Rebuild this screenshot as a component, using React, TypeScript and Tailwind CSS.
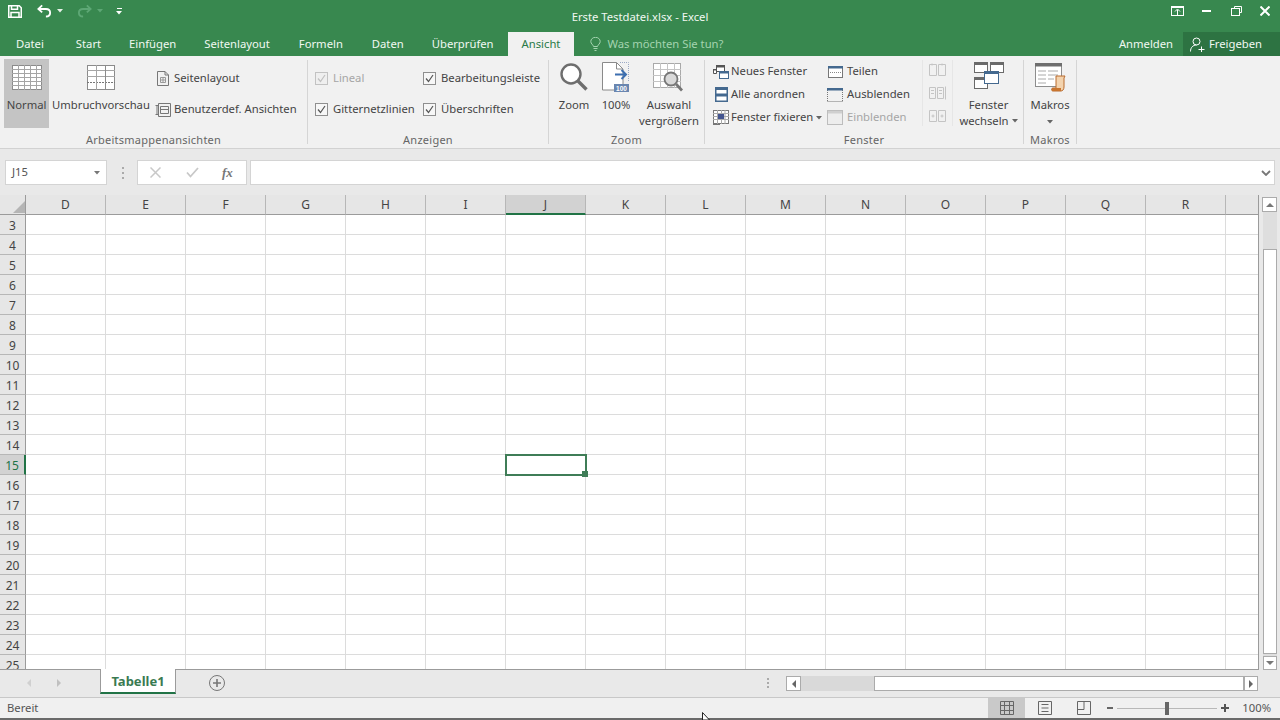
import React from "react";

const font = { fontFamily: '"Noto Sans", "Open Sans", "Liberation Sans", sans-serif' };
const columns = ["D", "E", "F", "G", "H", "I", "J", "K", "L", "M", "N", "O", "P", "Q", "R"];
const rows = Array.from({ length: 23 }, (_, i) => i + 3);

function Save() {
  return (
    <svg width="14" height="13" viewBox="0 0 14 13" fill="none" stroke="#fff" strokeWidth="1.500">
      <path d="M.75.75h10.500L13.250 2.750V12.250H.75z" />
      <path d="M3.500.75v3.500h6V.75M3 12.250V7.500h8v4.750" />
    </svg>
  );
}
function Undo({ color = "#fff", flip }: { color?: string; flip?: boolean }) {
  return (
    <svg width="15" height="14" viewBox="0 0 16 14" fill="none" stroke={color} strokeWidth="2" style={flip ? { transform: "scaleX(-1)" } : undefined}>
      <path d="M5.500 1 1.500 4.800l4 3.700" />
      <path d="M2 4.800h7.500c3 0 4.500 1.800 4.500 4s-1.500 4-4.500 4" />
    </svg>
  );
}
function Caret({ color = "#666", w = 5 }: { color?: string; w?: number }) {
  return (
    <svg width={w + 1} height={4} viewBox="0 0 6 4">
      <path d="M0 0h6L3 3.500z" fill={color} />
    </svg>
  );
}
function GridIcon({ w, h, break: pageBreak }: { w: number; h: number; break?: boolean }) {
  const vs = pageBreak ? [9, 18] : [6, 12, 18, 24];
  const hs = pageBreak ? [5, 11, 17] : [4, 8, 12, 16, 20];
  return (
    <svg width={w} height={h} viewBox={`0 0 ${w} ${h}`} fill="none">
      <rect x=".5" y=".5" width={w - 1} height={h - 1} fill="#fff" stroke="#8b8b8b" />
      {hs.map((y) => (
        <path key={y} d={`M0 ${y + 0.5}h${w}`} stroke={pageBreak && y === 17 ? "#777" : "#a5a5a5"} strokeDasharray={pageBreak && y === 17 ? "2 1" : undefined} />
      ))}
      {vs.map((x) => (
        <path key={x} d={`M${x + 0.5} 0v${h}`} stroke={pageBreak && x === 18 ? "#8b8b8b" : "#a5a5a5"} />
      ))}
    </svg>
  );
}
function PageLayoutIcon() {
  return (
    <svg width="12" height="15" viewBox="0 0 12 15" fill="none" stroke="#777">
      <path d="M.5.500h7.500L11.500 4v10.500H.5z" />
      <path d="M8 .5V4h3.500" />
      <path d="M3.500 6.500h5v5h-5zM6 6.500v5M3.500 9h5" stroke="#999" />
    </svg>
  );
}
function CustomViewIcon() {
  return (
    <svg width="16" height="16" viewBox="0 0 16 16" fill="none" stroke="#777">
      <path d="M3.500 1.500h12v13h-12z" />
      <path d="M.5 3.500h3M.5 12.500h3M2 3.500v9M5.500 4.500h8v7h-8z" />
      <path d="M5.500 7.500h8" />
    </svg>
  );
}
function Check({ disabled }: { disabled?: boolean }) {
  return (
    <span className={`flex h-[13px] w-[13px] shrink-0 items-center justify-center border ${disabled ? "border-[#c2c2c2] bg-[#efefef]" : "border-[#8f8f8f] bg-[#f7f7f7]"}`}>
      <svg width="9" height="9" viewBox="0 0 9 9" fill="none" stroke={disabled ? "#c0c0c0" : "#555"} strokeWidth="1.200">
        <path d="M1 4.500 3.500 7.500 8 1" />
      </svg>
    </span>
  );
}
function Mag() {
  return (
    <svg width="28" height="28" viewBox="0 0 28 28" fill="none">
      <circle cx="11" cy="11" r="9.500" stroke="#6e6e6e" strokeWidth="2.400" fill="#fff" />
      <path d="M18 18l8.500 8.500" stroke="#6e6e6e" strokeWidth="3.400" />
    </svg>
  );
}
function HundredIcon() {
  return (
    <svg width="28" height="30" viewBox="0 0 28 30" fill="none">
      <path d="M.5.500h14L21 7v21H.5z" fill="#fff" stroke="#8a8a8a" />
      <path d="M14.500.5V7H21" stroke="#8a8a8a" />
      <path d="M18 .5h8.500V19" stroke="#9aa8c4" strokeDasharray="1 1" />
      <path d="M13 12.500h10M19.500 8l4.500 4.500-4.500 4.500" stroke="#3d6fb0" strokeWidth="2" />
      <rect x="12" y="22" width="15" height="8" fill="#6a86b0" />
      <text x="19.500" y="28.600" fontSize="6.500" fontWeight="700" fill="#fff" textAnchor="middle" fontFamily="Liberation Sans">100</text>
    </svg>
  );
}
function ZoomSelectionIcon() {
  return (
    <svg width="32" height="30" viewBox="0 0 32 30" fill="none">
      <rect x=".5" y=".5" width="27" height="24" fill="#fff" stroke="#a9a9a9" />
      <path d="M0 6.500h28M0 12.500h28M0 18.500h28M7.500 0v25M14.500 0v25M21.500 0v25" stroke="#c4c4c4" />
      <circle cx="18" cy="16" r="6.500" fill="#d9d9d9" stroke="#767676" strokeWidth="1.800" />
      <path d="M23 21l6 6.500" stroke="#767676" strokeWidth="2.800" />
    </svg>
  );
}
function NewWindowIcon() {
  return (
    <svg width="16" height="14" viewBox="0 0 16 14" fill="none">
      <rect x="3.500" y=".5" width="8" height="6" stroke="#555" fill="#fff" />
      <path d="M3 0h9v2.500H3z" fill="#555" />
      <path d="M.5 4.500h3v4h-3z" stroke="#555" fill="#fff" />
      <path d="M0 4h4v1.500H0z" fill="#555" />
      <rect x="6.500" y="6.500" width="9" height="7" stroke="#44698f" fill="#fff" />
      <path d="M6 6h10v2.500H6z" fill="#44698f" />
    </svg>
  );
}
function ArrangeIcon() {
  return (
    <svg width="13" height="15" viewBox="0 0 13 15" fill="none">
      <rect x=".75" y=".75" width="11.500" height="13.500" stroke="#44698f" strokeWidth="1.500" fill="#fff" />
      <path d="M0 0h13v3H0zM0 6.500h13v3H0z" fill="#44698f" />
    </svg>
  );
}
function FreezeIcon() {
  return (
    <svg width="16" height="15" viewBox="0 0 16 15" fill="none">
      <rect x=".5" y=".5" width="15" height="13" fill="#fff" stroke="#777" />
      <path d="M0 3.500h16M0 6.500h16M0 9.500h16M4.500 0v14M8.500 0v14M12 0v14" stroke="#aaa" />
      <rect x="5" y="4" width="6" height="5" fill="#44558f" />
      <path d="M0 14.500h7" stroke="#777" />
    </svg>
  );
}
function SplitIcon() {
  return (
    <svg width="15" height="12" viewBox="0 0 15 12" fill="none">
      <rect x=".5" y=".5" width="14" height="11" stroke="#777" fill="#fff" />
      <path d="M0 0h15v2.500H0z" fill="#44698f" />
      <path d="M2 6.500h11" stroke="#888" strokeDasharray="1 1" />
    </svg>
  );
}
function HideIcon() {
  return (
    <svg width="16" height="14" viewBox="0 0 16 14" fill="none">
      <path d="M.5 13.500h15M.5 2v11M15.500 2v11" stroke="#777" strokeDasharray="1 1" />
      <path d="M0 0h16v2.500H0z" fill="#44698f" />
    </svg>
  );
}
function ShowIcon() {
  return (
    <svg width="16" height="15" viewBox="0 0 16 15" fill="none">
      <rect x=".5" y=".5" width="15" height="14" fill="#ededed" stroke="#bdbdbd" />
      <path d="M1 1h14v2.500H1z" fill="#cfcfcf" />
    </svg>
  );
}
function SmallDisabled({ kind }: { kind: number }) {
  return (
    <svg width="17" height="14" viewBox="0 0 17 14" fill="none" stroke="#c4c4c4">
      {kind === 0 && <path d="M.5 1.500h7v11h-7zM9.500 1.500h7v11h-7zM3 .5v2M13 .5v2" />}
      {kind === 1 && <path d="M.5 1.500h6v11h-6zM8.500 1.500h6v11h-6zM16.500 .5v13M2 4.500h3M2 7.500h3M10 4.500h3M10 7.500h3" />}
      {kind === 2 && <path d="M.5 1.500h7v11h-7zM9.500 1.500h7v11h-7zM2.500 7h3M11.500 7h3M4 5.500V8.500M13 5.500v3" />}
    </svg>
  );
}
function SwitchWindowIcon() {
  return (
    <svg width="30" height="27" viewBox="0 0 30 27" fill="none">
      <rect x=".5" y=".5" width="13" height="10" fill="#fff" stroke="#6a6a6a" />
      <path d="M0 0h14v3H0z" fill="#6a6a6a" />
      <rect x="16.500" y=".5" width="13" height="10" fill="#fff" stroke="#6a6a6a" />
      <path d="M16 0h14v3H16z" fill="#6a6a6a" />
      <rect x=".5" y="15.500" width="13" height="11" fill="#fff" stroke="#6a6a6a" />
      <path d="M0 15h14v3H0z" fill="#6a6a6a" />
      <rect x="10.500" y="9.500" width="14" height="12" fill="#fff" stroke="#44698f" />
      <path d="M10 9h15v3H10z" fill="#44698f" />
    </svg>
  );
}
function MacroIcon() {
  return (
    <svg width="31" height="29" viewBox="0 0 31 29" fill="none">
      <rect x=".5" y=".5" width="26" height="23" fill="#fff" stroke="#8d8d8d" />
      <path d="M0 0h27v3.500H0z" fill="#6e6e6e" />
      <path d="M3 8h8M13 8h10M3 12h8M13 12h10M3 16h8M13 16h6M3 20h8" stroke="#aaa" />
      <path d="M21 13h9l-1 2v9c0 2.500-1.500 4-3 4h-8c-2 0-2-3 0-3h3V14z" fill="#f3d3ae" stroke="#b96a2c" />
      <path d="M17 25h9v3h-9z" fill="#c9752f" />
    </svg>
  );
}
function Sep() {
  return <div className="mt-1 h-[84px] w-px shrink-0 bg-[#d5d5d5]" />;
}
function GroupLabel({ children }: { children: React.ReactNode }) {
  return <div className="absolute bottom-0 left-0 right-0 text-center text-[11px] leading-[16px] tracking-[0.25px] text-[#666]">{children}</div>;
}
function LargeButton({ w, icon, lines, iconH = 30, caret, top = 4, className = "" }: { w: number; icon: React.ReactNode; lines: React.ReactNode[]; iconH?: number; caret?: boolean; top?: number; className?: string }) {
  return (
    <div className={`flex shrink-0 flex-col items-center ${className}`} style={{ width: w }}>
      <div className="flex items-start justify-center" style={{ marginTop: top, height: iconH }}>
        {icon}
      </div>
      {lines.map((l, i) => (
        <div key={i} className="flex items-center gap-[3px] whitespace-nowrap text-center leading-[16px]">{l}</div>
      ))}
      {caret && <div className="mt-[7px]"><Caret /></div>}
    </div>
  );
}
function Row({ icon, label, iconW, muted }: { icon: React.ReactNode; label: React.ReactNode; iconW: number; muted?: boolean }) {
  return (
    <div className={`flex h-[23px] items-center whitespace-nowrap ${muted ? "text-[#a6a6a6]" : ""}`}>
      <span className="flex shrink-0 items-center justify-center" style={{ width: iconW }}>{icon}</span>
      {label}
    </div>
  );
}
function CheckRow({ label, disabled }: { label: string; disabled?: boolean }) {
  return (
    <div className={`flex h-[31px] items-center gap-[5px] whitespace-nowrap ${disabled ? "text-[#a6a6a6]" : ""}`}>
      <Check disabled={disabled} />
      {label}
    </div>
  );
}
function Tab({ children, ml, active }: { children: string; ml: number; active?: boolean }) {
  return (
    <div className={`flex h-[24px] items-center whitespace-nowrap ${active ? "bg-[#f1f1f1] px-[14px] text-[#2b7a48]" : "text-[#f1f8f2]"}`} style={{ marginLeft: ml }}>
      {children}
    </div>
  );
}
function Dots() {
  return (
    <>
      <div className="h-[2px] w-[2px] bg-[#aaa]" />
      <div className="h-[2px] w-[2px] bg-[#aaa]" />
      <div className="h-[2px] w-[2px] bg-[#aaa]" />
    </>
  );
}

export default function App() {
  return (
    <div className="relative flex h-[720px] w-[1280px] flex-col overflow-hidden bg-[#e9e9e9] text-[11.25px] text-[#444]" style={font}>
      {/* Title bar */}
      <div className="relative flex h-[32px] shrink-0 items-start bg-[#38884f] text-white">
        <div className="ml-[8px] mt-[5px]"><Save /></div>
        <div className="ml-[15px] mt-[4px]"><Undo /></div>
        <div className="ml-[5px] mt-[9px]"><Caret color="#e8f2ea" /></div>
        <div className="ml-[14px] mt-[4px]"><Undo color="#5da775" flip /></div>
        <div className="ml-[5px] mt-[9px]"><Caret color="#5da775" /></div>
        <div className="ml-[13px] mt-[8px] flex flex-col items-center gap-[2px]">
          <div className="h-px w-[5px] bg-white" />
          <Caret color="#fff" />
        </div>
        <div className="absolute left-0 right-0 top-[9px] text-center text-[11.25px] leading-[16px] text-[#f1f8f2]">Erste Testdatei.xlsx - Excel</div>
        <div className="ml-auto mr-[10px] mt-[6px] flex items-center">
          <svg width="13" height="10" viewBox="0 0 13 10" fill="none" stroke="#fff">
            <rect x=".5" y=".5" width="12" height="9" />
            <path d="M0 1h13" strokeWidth="2" />
            <path d="M6.500 9V4M4 5.500l2.500-2.500L9 5.500" />
          </svg>
          <div className="ml-[18px] h-[2px] w-[9px] bg-white" />
          <svg className="ml-[20px]" width="11" height="10" viewBox="0 0 11 10" fill="none" stroke="#fff">
            <path d="M3.500 2.500V.5h7v6H8.500" />
            <rect x=".5" y="2.500" width="8" height="7" />
          </svg>
          <svg className="ml-[18px]" width="10" height="10" viewBox="0 0 10 10" fill="none" stroke="#fff" strokeWidth="2">
            <path d="M.5.5l9 9M9.500.5l-9 9" />
          </svg>
        </div>
      </div>
      {/* Tabs */}
      <div className="flex h-[24px] shrink-0 items-center bg-[#38884f]">
        <Tab ml={16}>Datei</Tab>
        <Tab ml={32}>Start</Tab>
        <Tab ml={28}>Einfügen</Tab>
        <Tab ml={28}>Seitenlayout</Tab>
        <Tab ml={29}>Formeln</Tab>
        <Tab ml={29}>Daten</Tab>
        <Tab ml={28}>Überprüfen</Tab>
        <Tab ml={14} active>Ansicht</Tab>
        <div className="ml-[16px] flex items-center gap-[6px] whitespace-nowrap text-[#a4d4b0]">
          <svg width="11" height="14" viewBox="0 0 11 14" fill="none" stroke="#a4d4b0">
            <path d="M3.500 9.500C3 7.500.8 6.800.8 4.500a4.700 4.200 0 0 1 9.400 0c0 2.300-2.200 3-2.700 5z" />
            <path d="M3.500 11.500h4M4.500 13.500h2" />
          </svg>
          Was möchten Sie tun?
        </div>
        <div className="ml-auto mr-[10px] text-[#f1f8f2]">Anmelden</div>
        <div className="flex h-[24px] w-[97px] items-center gap-[4px] bg-[#2d7342] pl-[7px] text-[#f1f8f2]">
          <svg width="15" height="15" viewBox="0 0 15 15" fill="none" stroke="#fff">
            <circle cx="6.500" cy="4.500" r="3.500" />
            <path d="M.5 14.500c0-4 2.500-6.500 6-6.500M8.500 12.500h6M11.500 9.500v5.500" />
          </svg>
          Freigeben
        </div>
      </div>
      {/* Ribbon */}
      <div className="flex h-[93px] shrink-0 border-b border-[#d2d2d2] bg-[#f1f1f1]">
        <div className="relative flex h-full w-[307px] shrink-0 pl-[4px] pt-[3px]">
          <div className="h-[69px] w-[45px] shrink-0 bg-[#c4c4c4]">
            <LargeButton w={45} top={6} iconH={32} icon={<GridIcon w={30} h={25} />} lines={["Normal"]} />
          </div>
          <LargeButton w={100} className="ml-[2px]" top={6} iconH={32} icon={<GridIcon w={28} h={25} break />} lines={["Umbruchvorschau"]} />
          <div className="ml-[6px] mt-[4px] flex flex-col">
            <div className="flex h-[31px] items-center whitespace-nowrap">
              <PageLayoutIcon />
              <span className="ml-[5px]">Seitenlayout</span>
            </div>
            <div className="flex h-[31px] items-center whitespace-nowrap">
              <span className="-ml-[2px]"><CustomViewIcon /></span>
              <span className="ml-[3px]">Benutzerdef. Ansichten</span>
            </div>
          </div>
          <GroupLabel>Arbeitsmappenansichten</GroupLabel>
        </div>
        <Sep />
        <div className="relative flex h-full w-[240px] shrink-0 pl-[7px] pt-[7px]">
          <div className="flex w-[108px] shrink-0 flex-col">
            <CheckRow label="Lineal" disabled />
            <CheckRow label="Gitternetzlinien" />
          </div>
          <div className="flex flex-col">
            <CheckRow label="Bearbeitungsleiste" />
            <CheckRow label="Überschriften" />
          </div>
          <GroupLabel>Anzeigen</GroupLabel>
        </div>
        <Sep />
        <div className="relative flex h-full w-[155px] shrink-0 pl-[5px]">
          <LargeButton w={40} top={7} iconH={34} icon={<Mag />} lines={["Zoom"]} />
          <LargeButton w={44} top={6} iconH={35} icon={<HundredIcon />} lines={["100%"]} />
          <LargeButton w={62} top={7} iconH={34} icon={<ZoomSelectionIcon />} lines={["Auswahl", "vergrößern"]} />
          <GroupLabel>Zoom</GroupLabel>
        </div>
        <Sep />
        <div className="relative flex h-full w-[318px] shrink-0 pl-[7px] pt-[4px]">
          <div className="flex w-[115px] shrink-0 flex-col">
            <Row iconW={18} icon={<NewWindowIcon />} label={<span className="ml-[1px]">Neues Fenster</span>} />
            <Row iconW={18} icon={<ArrangeIcon />} label={<span className="ml-[1px]">Alle anordnen</span>} />
            <Row iconW={18} icon={<FreezeIcon />} label={<span className="ml-[1px] flex items-center gap-[3px]">Fenster fixieren <Caret /></span>} />
          </div>
          <div className="flex w-[95px] shrink-0 flex-col">
            <Row iconW={16} icon={<SplitIcon />} label={<span className="ml-[4px]">Teilen</span>} />
            <Row iconW={16} icon={<HideIcon />} label={<span className="ml-[4px]">Ausblenden</span>} />
            <Row iconW={16} muted icon={<ShowIcon />} label={<span className="ml-[4px]">Einblenden</span>} />
          </div>
          <div className="flex h-[66px] w-[31px] shrink-0 flex-col items-center gap-[9px] border-l border-r border-[#e6e6e6] pt-[3px]">
            <SmallDisabled kind={0} />
            <SmallDisabled kind={1} />
            <SmallDisabled kind={2} />
          </div>
          <LargeButton w={71} top={2} iconH={35} icon={<SwitchWindowIcon />} lines={["Fenster", <>wechseln <Caret /></>]} />
          <GroupLabel>Fenster</GroupLabel>
        </div>
        <Sep />
        <div className="relative flex h-full w-[52px] shrink-0">
          <LargeButton w={52} top={7} iconH={34} icon={<MacroIcon />} lines={["Makros"]} caret />
          <GroupLabel>Makros</GroupLabel>
        </div>
        <Sep />
      </div>
      {/* Formula bar */}
      <div className="flex h-[46px] shrink-0 items-start bg-[#e9e9e9] pl-[5px] pt-[11px]">
        <div className="flex h-[25px] w-[102px] items-center justify-between border border-[#d4d4d4] bg-white pl-[6px] pr-[5px] text-[#555]">
          J15
          <Caret color="#777" w={7} />
        </div>
        <div className="ml-[15px] flex h-[25px] flex-col justify-center gap-[3px]">
          <Dots />
        </div>
        <div className="ml-[13px] flex h-[25px] w-[110px] items-center border border-[#d4d4d4] bg-white">
          <svg className="ml-[12px]" width="11" height="11" viewBox="0 0 11 11" fill="none" stroke="#c8c8c8" strokeWidth="1.500">
            <path d="M.5.5l10 10M10.500.5l-10 10" />
          </svg>
          <svg className="ml-[25px]" width="13" height="11" viewBox="0 0 13 11" fill="none" stroke="#c8c8c8" strokeWidth="1.800">
            <path d="M1 5.500 4.500 9.500 12 1" />
          </svg>
          <span className="ml-[23px] text-[13px] font-bold italic leading-none text-[#777]" style={{ fontFamily: '"Liberation Serif", serif' }}>fx</span>
        </div>
        <div className="ml-[3px] flex h-[25px] w-[1025px] items-center justify-end border border-[#d4d4d4] bg-white pr-[3px]">
          <svg width="10" height="6" viewBox="0 0 10 6" fill="none" stroke="#777" strokeWidth="1.800">
            <path d="M1 1l4 4 4-4" />
          </svg>
        </div>
      </div>
      {/* Sheet */}
      <div className="relative flex min-h-0 flex-1">
        <div className="w-[1259px] shrink-0 overflow-hidden border-b border-r border-[#9b9b9b] bg-white">
          <div className="flex h-[20px] bg-[#e6e6e6]">
            <div className="relative h-[20px] w-[26px] shrink-0 border-b border-r border-[#9b9b9b]">
              <svg className="absolute bottom-[1px] right-0" width="12" height="12" viewBox="0 0 12 12"><path d="M12 0v12H0z" fill="#b5b5b5" /></svg>
            </div>
            {columns.map((c) => (
              <div key={c} className={`flex h-[20px] w-[80px] shrink-0 items-center justify-center border-r border-[#b7b7b7] pt-px text-[12px] ${c === "J" ? "border-b-2 border-b-[#217346] bg-[#d2d2d2]" : "border-b border-b-[#9b9b9b]"}`}>
                {c}
              </div>
            ))}
            <div className="h-[20px] flex-1 border-b border-[#9b9b9b]" />
          </div>
          {rows.map((r) => (
            <div key={r} className="flex h-[20px]">
              <div className={`flex h-[20px] w-[26px] shrink-0 items-center justify-center border-b pt-[2px] text-[12px] ${r === 15 ? "border-r-2 border-b-[#b7b7b7] border-r-[#217346] bg-[#d2d2d2] text-[#217346]" : "border-r border-b-[#b7b7b7] border-r-[#9b9b9b] bg-[#e6e6e6]"}`}>
                {r}
              </div>
              {columns.map((c) => (
                <div key={c} className="relative h-[20px] w-[80px] shrink-0 border-b border-r border-[#dcdcdc]">
                  {r === 15 && c === "J" && (
                    <div className="absolute -left-[1px] -top-[1px] z-10 h-[22px] w-[82px] border-2 border-[#3f7d57]">
                      <div className="absolute -bottom-[3px] -right-[3px] h-[6px] w-[6px] bg-[#3f7d57]" />
                    </div>
                  )}
                </div>
              ))}
              <div className="h-[20px] flex-1 border-b border-[#dcdcdc]" />
            </div>
          ))}
        </div>
        {/* Vertical scrollbar */}
        <div className="flex flex-1 flex-col items-start pl-[3px] pt-[2px]">
          <div className="flex h-[15px] w-[15px] shrink-0 items-center justify-center border border-[#ababab] bg-white">
            <svg width="8" height="4" viewBox="0 0 8 4"><path d="M0 4h8L4 0z" fill="#777" /></svg>
          </div>
          <div className="ml-px min-h-0 w-[14px] flex-1 bg-[#dedede] pt-[37px]">
            <div className="h-[405px] w-[14px] border border-[#ababab] bg-white" />
          </div>
          <div className="ml-px flex h-[14px] w-[14px] shrink-0 items-center justify-center border border-[#ababab] bg-white">
            <svg width="8" height="4" viewBox="0 0 8 4"><path d="M0 0h8L4 4z" fill="#777" /></svg>
          </div>
        </div>
      </div>
      {/* Sheet tabs */}
      <div className="flex h-[27px] shrink-0 items-start bg-[#e9e9e9]">
        <div className="ml-[27px] mt-[9px] h-0 w-0 border-y-[4px] border-r-[4px] border-y-transparent border-r-[#d0d0d0]" />
        <div className="ml-[26px] mt-[9px] h-0 w-0 border-y-[4px] border-l-[4px] border-y-transparent border-l-[#c0c0c0]" />
        <div className="relative -mt-px ml-[39px] flex h-[25px] w-[76px] items-center justify-center border-x border-b-2 border-x-[#9b9b9b] border-b-[#217346] bg-white pt-[2px] text-[13px] font-bold text-[#3a7a52]">
          Tabelle1
        </div>
        <div className="ml-[33px] mt-[5px] flex h-[16px] w-[16px] items-center justify-center rounded-full border border-[#777]">
          <svg width="8" height="8" viewBox="0 0 8 8" stroke="#777" strokeWidth="1.600"><path d="M0 4h8M4 0v8" /></svg>
        </div>
        <div className="ml-[542px] mt-[8px] flex flex-col gap-[2px]">
          <Dots />
        </div>
        <div className="ml-[17px] mt-[6px] flex h-[15px] w-[472px]">
          <div className="flex w-[15px] shrink-0 items-center justify-center border border-[#ababab] bg-white">
            <div className="h-0 w-0 border-y-[4px] border-r-[4px] border-y-transparent border-r-[#666]" />
          </div>
          <div className="w-[73px] shrink-0 bg-[#d9d9d9]" />
          <div className="flex-1 border border-[#ababab] bg-white" />
          <div className="flex w-[14px] shrink-0 items-center justify-center border border-[#ababab] bg-white">
            <div className="h-0 w-0 border-y-[4px] border-l-[4px] border-y-transparent border-l-[#666]" />
          </div>
        </div>
      </div>
      {/* Status bar */}
      <div className="flex h-[23px] shrink-0 items-center border-t border-b-2 border-t-[#c8c8c8] border-b-[#6a6a6a] bg-[#f0f0f0] pl-[7px] text-[#555]">
        <span className="pt-px">Bereit</span>
        <div className="ml-auto flex h-full items-center pr-[9px]">
          <div className="flex h-full w-[37px] items-center justify-center bg-[#c9c9c9]">
            <svg width="14" height="14" viewBox="0 0 14 14" fill="none" stroke="#666"><path d="M.5.5h13v13H.5zM.5 4.500h13M.5 9.500h13M4.500.5v13M9.500.5v13" /></svg>
          </div>
          <svg className="ml-[13px]" width="14" height="14" viewBox="0 0 14 14" fill="none" stroke="#666"><path d="M.5.5h13v13H.5zM3.500 3.500h7M3.500 7h7M3.500 10.500h7" /></svg>
          <svg className="ml-[25px]" width="14" height="14" viewBox="0 0 14 14" fill="none" stroke="#666"><path d="M.5.5h13v13H.5zM.5 8.500h6.500M7 .5v8" /></svg>
          <div className="ml-[16px] h-[2px] w-[6px] bg-[#666]" />
          <div className="relative ml-[4px] h-px w-[100px] bg-[#b8b8b8]">
            <div className="absolute -top-[6px] left-[48px] h-[13px] w-[4px] bg-[#666]" />
          </div>
          <svg className="ml-[4px]" width="8" height="8" viewBox="0 0 8 8" stroke="#555" strokeWidth="2"><path d="M0 4h8M4 0v8" /></svg>
          <span className="ml-[13px] pt-px text-[#555]">100%</span>
        </div>
      </div>
      {/* Mouse pointer */}
      <svg className="absolute left-[702px] top-[712px]" width="9" height="8" viewBox="0 0 9 8">
        <path d="M.5.500v7.500h7z" fill="#fff" stroke="#222" />
      </svg>
    </div>
  );
}
